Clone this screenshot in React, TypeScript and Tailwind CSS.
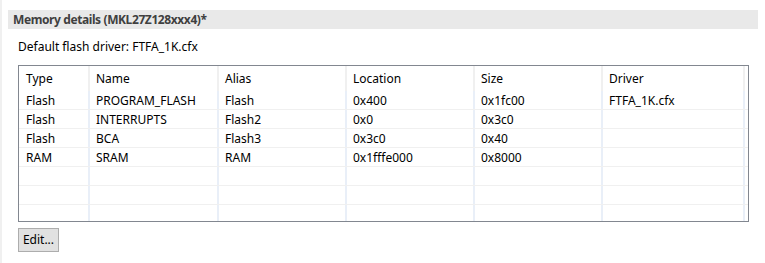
import React from "react";

const cols = [71, 129, 128, 128, 128, 142];
const headers = ["Type", "Name", "Alias", "Location", "Size", "Driver"];
const rows: string[][] = [
  ["Flash", "PROGRAM_FLASH", "Flash", "0x400", "0x1fc00", "FTFA_1K.cfx"],
  ["Flash", "INTERRUPTS", "Flash2", "0x0", "0x3c0", ""],
  ["Flash", "BCA", "Flash3", "0x3c0", "0x40", ""],
  ["RAM", "SRAM", "RAM", "0x1fffe000", "0x8000", ""],
  ["", "", "", "", "", ""],
  ["", "", "", "", "", ""],
];

export default function App() {
  const font = { fontFamily: '"Segoe UI", "Noto Sans", "Open Sans", sans-serif' };
  return (
    <div className="w-[765px] h-[263px] bg-white flex text-[12px] text-black overflow-hidden" style={font}>
      <div className="w-[2px] h-full bg-[#f0f0f0]" />
      <div className="flex flex-col pl-[6px] pt-[10px]">
        <div className="w-[750px] h-[19px] bg-[#e9e9e9] pl-[5px] flex items-center font-bold text-[#404040] text-[12px] tracking-[-0.4px]">
          Memory details (MKL27Z128xxx4)*
        </div>
        <div className="pl-[10px] h-[36px] flex items-center">Default flash driver: FTFA_1K.cfx</div>
        <div className="ml-[10px] w-[731px] h-[157px] border border-[#828790] flex flex-col">
          <div className="flex h-[25px]">
            {headers.map((h, i) => (
              <div
                key={i}
                style={{ width: cols[i] }}
                className={`h-full flex items-center border-r-2 border-[#f0f0f0] ${i === 0 ? "pl-[7px]" : "pl-[6px]"}`}
              >
                {h}
              </div>
            ))}
          </div>
          {rows.map((r, ri) => (
            <div key={ri} className="flex h-[19px] border-b border-[#f0f0f0]">
              {r.map((c, i) => (
                <div
                  key={i}
                  style={{ width: cols[i] }}
                  className={`h-full flex items-center pt-[1px] border-r-2 border-[#e9eff8] ${i === 0 ? "pl-[7px]" : "pl-[6px]"}`}
                >
                  {c}
                </div>
              ))}
            </div>
          ))}
          <div className="flex flex-1">
            {cols.map((w, i) => (
              <div key={i} style={{ width: w }} className="h-full border-r-2 border-[#e9eff8]" />
            ))}
          </div>
        </div>
        <div className="ml-[10px] mt-[6px] w-[41px] h-[24px] bg-[#e1e1e1] border border-[#adadad] flex items-center justify-center">
          Edit...
        </div>
      </div>
    </div>
  );
}
